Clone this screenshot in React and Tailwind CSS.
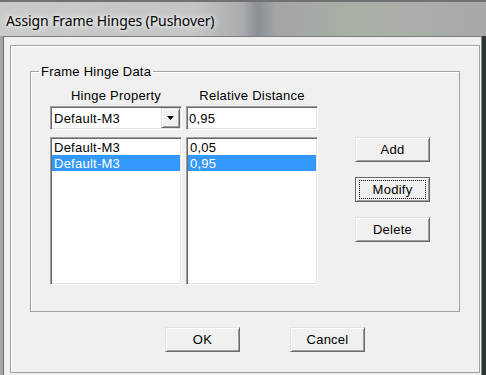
import React from "react";

const raised =
  "border border-t-[#e3e3e3] border-l-[#e3e3e3] border-r-[#696969] border-b-[#696969] shadow-[inset_1px_1px_0_#fff,inset_-1px_-1px_0_#a0a0a0]";
const sunken =
  "border border-t-[#a0a0a0] border-l-[#a0a0a0] border-r-white border-b-white shadow-[inset_1px_1px_0_#696969,inset_-1px_-1px_0_#e3e3e3]";

function PushButton({ label, isDefault }) {
  if (isDefault) {
    return (
      <button
        type="button"
        className="w-[75px] h-[25px] flex bg-[#f0f0f0] border border-[#646464] shadow-[inset_1px_1px_0_#fff,inset_-1px_-1px_0_#a0a0a0] p-0"
      >
        <span className="flex-1 mx-[3px] my-[2px] border border-dotted border-black flex items-center justify-center">
          {label}
        </span>
      </button>
    );
  }
  return (
    <button
      type="button"
      className={`w-[75px] h-[25px] flex items-center justify-center bg-[#f0f0f0] ${raised}`}
    >
      {label}
    </button>
  );
}

function ListBox({ items, selected }) {
  return (
    <div className={`w-[132px] h-[148px] bg-white p-[1px] ${sunken}`}>
      {items.map((item, i) => (
        <div
          key={i}
          className={`h-[16px] pl-[2px] flex items-center ${
            i === selected ? "bg-[#3399ff] text-white" : ""
          }`}
        >
          {item}
        </div>
      ))}
    </div>
  );
}

export default function App() {
  const hinges = [
    { property: "Default-M3", distance: "0,05" },
    { property: "Default-M3", distance: "0,95" },
  ];
  const selected = 1;

  return (
    <div className="w-[486px] h-[375px] flex flex-col overflow-hidden bg-[#a6a8a8] text-black text-[13px] leading-[15px] tracking-[0.25px] font-['Liberation_Sans',Arial,sans-serif]">
      {/* aero title bar */}
      <div className="h-[36px] shrink-0 flex items-start pt-[9px] pl-[6px] border-t-2 border-[#707272] bg-[linear-gradient(90deg,#c9cbcb_0%,#c3c5c5_40%,#a9abad_50%,#8b9095_53%,#a3a5a5_57%,#a8b0a6_72%,#aaaea9_85%,#a7aaa7_100%)]">
        <span className="text-[14px] leading-[20px] tracking-[-0.1px] text-black font-['Noto_Sans',sans-serif] [text-shadow:0_0_8px_#fff,0_0_4px_#fff]">
          Assign Frame Hinges (Pushover)
        </span>
      </div>

      <div className="flex-1 flex min-h-0">
        <div className="w-[3px] bg-[#a4a6a6]" />
        <div className="flex-1 flex flex-col bg-[#f0f0f0] border-l border-t border-r border-l-[#6a6a6a] border-t-[#7c7c7c] border-r-[#8a8a8a] pt-[8px] pl-[6px] pr-[1px]">
          <div className="flex-1 mb-[2px] border border-[#a0a0a0] shadow-[inset_1px_1px_0_#fff]">
            <fieldset className="mt-[18px] mx-[19px] h-[248px] p-0 border border-[#a0a0a0] shadow-[inset_1px_1px_0_#fff]">
              <legend className="ml-[8px] px-[2px] bg-[#f0f0f0]">Frame Hinge Data</legend>

              <div className="pl-[19px] pt-[9px]">
                <div className="flex gap-[4px]">
                  <div className="w-[132px] text-center">Hinge Property</div>
                  <div className="w-[132px] text-center">Relative Distance</div>
                </div>

                <div className="flex gap-[4px] mt-[3px]">
                  <div className={`w-[132px] h-[24px] bg-white p-[1px] flex ${sunken}`}>
                    <div className="flex-1 flex items-center pl-[2px]">Default-M3</div>
                    <div className={`w-[19px] flex items-center justify-center bg-[#f0f0f0] ${raised}`}>
                      <svg width="7" height="4" viewBox="0 0 7 4">
                        <path d="M0 0h7L3.5 4z" fill="#000" />
                      </svg>
                    </div>
                  </div>
                  <div className={`w-[132px] h-[24px] bg-white p-[1px] flex items-center ${sunken}`}>
                    <span className="pl-[1px]">0,95</span>
                  </div>
                </div>

                <div className="flex mt-[7px]">
                  <div className="flex gap-[4px]">
                    <ListBox items={hinges.map((h) => h.property)} selected={selected} />
                    <ListBox items={hinges.map((h) => h.distance)} selected={selected} />
                  </div>
                  <div className="ml-[37px] flex flex-col gap-[15px]">
                    <PushButton label="Add" />
                    <PushButton label="Modify" isDefault />
                    <PushButton label="Delete" />
                  </div>
                </div>
              </div>
            </fieldset>

            <div className="flex gap-[50px] mt-[15px] ml-[154px]">
              <PushButton label="OK" />
              <PushButton label="Cancel" />
            </div>
          </div>
        </div>
        <div className="w-[4px] bg-[#2f3531]" />
      </div>
    </div>
  );
}
